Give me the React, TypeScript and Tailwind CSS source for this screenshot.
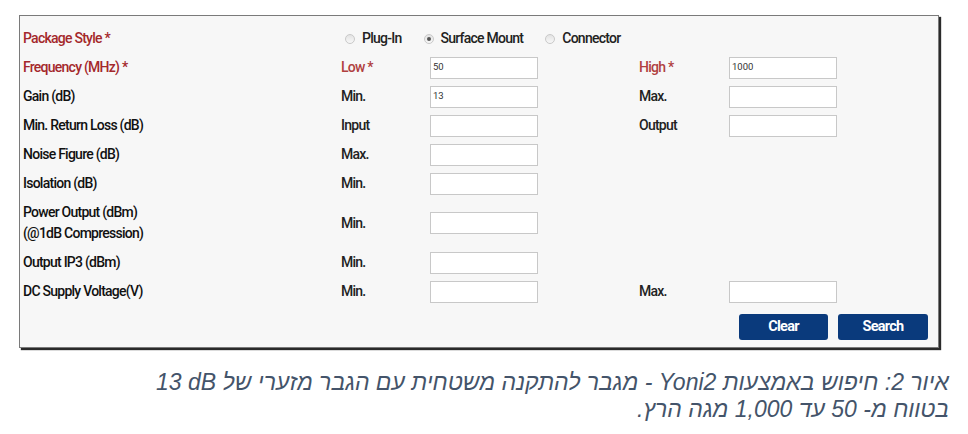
import React from 'react';

const red = 'text-[#a4282b]';

function Field({ value = '' }: { value?: string }) {
  return (
    <div className="w-[108px] h-[22px] border border-[#c8c8c8] bg-white flex items-center pl-[2px] text-[9.5px] font-normal tracking-normal text-[#333]">
      {value}
    </div>
  );
}

function Radio({ checked, label }: { checked?: boolean; label: string }) {
  return (
    <div className="flex items-center">
      <span className="w-[10px] h-[10px] rounded-full border border-[#c9c9c9] bg-gradient-to-b from-[#e3e3e3] to-[#f8f8f8] flex items-center justify-center">
        {checked && <span className="w-[4px] h-[4px] rounded-full bg-[#555]" />}
      </span>
      <span className="ml-[7px]">{label}</span>
    </div>
  );
}

interface RowProps {
  label: React.ReactNode;
  labelRed?: boolean;
  mid?: string;
  midRed?: boolean;
  value?: string;
  right?: string;
  rightRed?: boolean;
  rightValue?: string;
  tall?: boolean;
}

function Row({ label, labelRed, mid, midRed, value, right, rightRed, rightValue, tall }: RowProps) {
  return (
    <div className={`flex items-center ${tall ? 'h-[50px]' : 'h-[29px]'}`}>
      <div className={`w-[318px] leading-[21px] ${labelRed ? red : 'text-[#111]'}`}>{label}</div>
      <div className={`w-[89px] ${midRed ? 'text-[#b0403f]' : 'text-[#222]'}`}>{mid}</div>
      <Field value={value} />
      {right !== undefined && (
        <>
          <div className={`ml-[101px] w-[90px] ${rightRed ? 'text-[#b0403f]' : 'text-[#222]'}`}>{right}</div>
          <Field value={rightValue} />
        </>
      )}
    </div>
  );
}

export default function App() {
  return (
    <div className="w-[968px] h-[434px] bg-white overflow-hidden">
      <div className="ml-[19px] mt-[15px] w-[920px] h-[333px] border border-[#7a7a7a] bg-[#f7f7f7] shadow-[2px_2px_1px_#2a2a2a] pl-[3px] pt-[8px] pr-[10px] font-['Roboto',sans-serif] font-medium text-[14px] tracking-[-0.75px]">
        <div className="flex items-center h-[29px]">
          <div className={`w-[322px] ${red}`}>Package Style *</div>
          <div className="flex items-center gap-[22px] text-[#222]">
            <Radio label="Plug-In" />
            <Radio checked label="Surface Mount" />
            <Radio label="Connector" />
          </div>
        </div>
        <Row label="Frequency (MHz) *" labelRed mid="Low *" midRed value="50" right="High *" rightRed rightValue="1000" />
        <Row label="Gain (dB)" mid="Min." value="13" right="Max." />
        <Row label="Min. Return Loss (dB)" mid="Input" right="Output" />
        <Row label="Noise Figure (dB)" mid="Max." />
        <Row label="Isolation (dB)" mid="Min." />
        <Row
          tall
          label={
            <>
              Power Output (dBm)
              <br />
              (@1dB Compression)
            </>
          }
          mid="Min."
        />
        <Row label="Output IP3 (dBm)" mid="Min." />
        <Row label="DC Supply Voltage(V)" mid="Min." right="Max." />
        <div className="flex justify-end gap-[10px] mt-[8px]">
          <button className="w-[89px] h-[26px] rounded-[3px] bg-[#0a3a7c] text-white font-bold text-[14.5px]">Clear</button>
          <button className="w-[90px] h-[26px] rounded-[3px] bg-[#0a3a7c] text-white font-bold text-[14.5px]">Search</button>
        </div>
      </div>
      <div
        dir="rtl"
        className="mt-[21px] w-[949px] italic text-[#44546a] font-['Liberation_Sans',sans-serif] text-[23px] leading-[27px]"
      >
        איור 2: חיפוש באמצעות Yoni2 - מגבר להתקנה משטחית עם הגבר מזערי של <span dir="ltr">13 dB</span>
        <br />
        בטווח מ- 50 עד 1,000 מגה הרץ.
      </div>
    </div>
  );
}
